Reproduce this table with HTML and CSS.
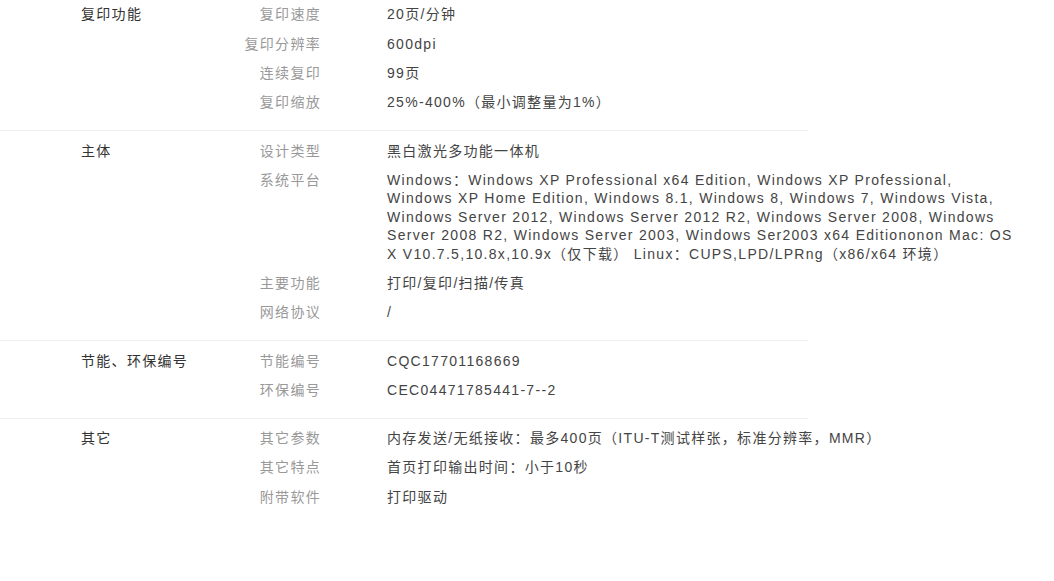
FILE: index.html
```html
<!DOCTYPE html>
<html lang="zh-CN">

<head>
    <meta charset="UTF-8">
    <meta name="viewport" content="width=device-width, initial-scale=1.0">
    <title>规格参数</title>
    <link rel="stylesheet" href="styles.css">
</head>

<body>
    <div class="specs">
        <div class="group">
            <div class="group-name">复印功能</div>
            <ul class="items">
                <li><span class="label">复印速度</span><span class="value">20页/分钟</span></li>
                <li><span class="label">复印分辨率</span><span class="value">600dpi</span></li>
                <li><span class="label">连续复印</span><span class="value">99页</span></li>
                <li><span class="label">复印缩放</span><span class="value">25%-400%（最小调整量为1%）</span></li>
            </ul>
        </div>
        <div class="group">
            <div class="group-name">主体</div>
            <ul class="items">
                <li><span class="label">设计类型</span><span class="value">黑白激光多功能一体机</span></li>
                <li><span class="label">系统平台</span><span class="value">Windows：Windows XP Professional x64 Edition, Windows XP Professional, Windows XP Home Edition, Windows 8.1, Windows 8, Windows 7, Windows Vista, Windows Server 2012, Windows Server 2012 R2, Windows Server 2008, Windows Server 2008 R2, Windows Server 2003, Windows Ser2003 x64 Editiononon Mac: OS X V10.7.5,10.8x,10.9x（仅下载） Linux：CUPS,LPD/LPRng（x86/x64 环境）</span></li>
                <li><span class="label">主要功能</span><span class="value">打印/复印/扫描/传真</span></li>
                <li><span class="label">网络协议</span><span class="value">/</span></li>
            </ul>
        </div>
        <div class="group">
            <div class="group-name">节能、环保编号</div>
            <ul class="items">
                <li><span class="label">节能编号</span><span class="value">CQC17701168669</span></li>
                <li><span class="label">环保编号</span><span class="value">CEC04471785441-7--2</span></li>
            </ul>
        </div>
        <div class="group">
            <div class="group-name">其它</div>
            <ul class="items">
                <li><span class="label">其它参数</span><span class="value">内存发送/无纸接收：最多400页（ITU-T测试样张，标准分辨率，MMR）</span></li>
                <li><span class="label">其它特点</span><span class="value">首页打印输出时间：小于10秒</span></li>
                <li><span class="label">附带软件</span><span class="value">打印驱动</span></li>
            </ul>
        </div>
    </div>
</body>

</html>
```

FILE: styles.css
```css
* {
    margin: 0;
    padding: 0;
    box-sizing: border-box;
}

body {
    background: #fff;
    font-family: "Liberation Sans", "Noto Sans CJK SC", sans-serif;
    font-size: 14px;
    letter-spacing: 1.3px;
    text-spacing-trim: space-all;
    color: #333;
}

.specs {
    width: 808px;
    margin-top: -5px;
}

.group {
    display: flex;
    padding: 5px 0 13px 81px;
    border-bottom: 1px solid #eee;
}

.group:last-child {
    border-bottom: none;
}

.group-name {
    flex: none;
    width: 150px;
    line-height: 18.5px;
    padding-top: 5.4px;
    color: #333;
}

.items {
    flex: none;
    list-style: none;
}

.items li {
    display: flex;
    padding: 5.4px 0;
    line-height: 18.5px;
}

.label {
    flex: none;
    width: 90px;
    text-align: right;
    color: #999;
}

.value {
    flex: none;
    width: 632px;
    margin-left: 66px;
    color: #444;
}
```
